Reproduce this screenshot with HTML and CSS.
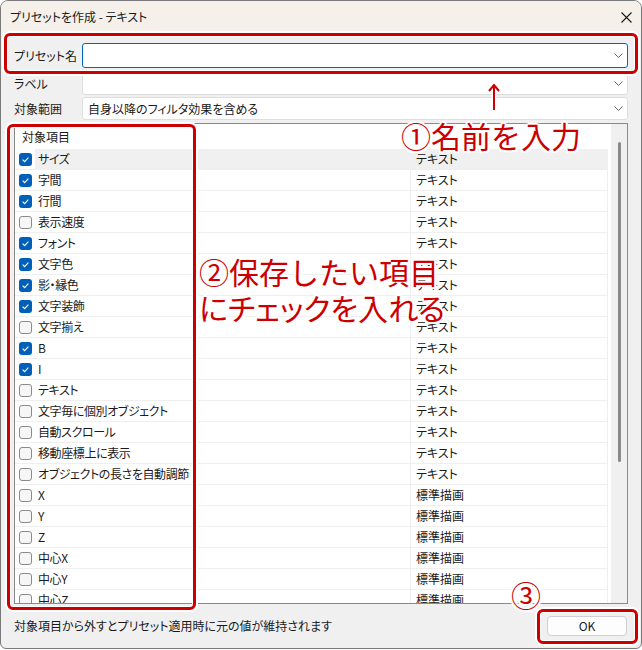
FILE: index.html
```html
<!DOCTYPE html>
<html lang="ja">
<head>
    <meta charset="UTF-8">
    <title>プリセットを作成 - テキスト</title>
    <link rel="stylesheet" href="styles.css">
</head>
<body>
<div class="window">
    <div class="titlebar">
        <span class="title">プリセットを作成 - テキスト</span>
        <svg class="close" width="11" height="11" viewBox="0 0 11 11"><path d="M0.5 0.5 L10.5 10.5 M10.5 0.5 L0.5 10.5" stroke="#1a1a1a" stroke-width="1.1" fill="none"/></svg>
    </div>

    <div class="content">
        <div class="field field-name">
            <label>プリセット名</label>
            <div class="combo focused">
                <span></span>
                <svg class="chev" width="9" height="5" viewBox="0 0 9 5"><polyline points="0.5,0.5 4.5,4.5 8.5,0.5" stroke="#666" fill="none"/></svg>
            </div>
        </div>
        <div class="field field-label">
            <label>ラベル</label>
            <div class="combo">
                <span></span>
                <svg class="chev" width="9" height="5" viewBox="0 0 9 5"><polyline points="0.5,0.5 4.5,4.5 8.5,0.5" stroke="#666" fill="none"/></svg>
            </div>
        </div>
        <div class="field field-range">
            <label>対象範囲</label>
            <div class="combo">
                <span>自身以降のフィルタ効果を含める</span>
                <svg class="chev" width="9" height="5" viewBox="0 0 9 5"><polyline points="0.5,0.5 4.5,4.5 8.5,0.5" stroke="#666" fill="none"/></svg>
            </div>
        </div>

        <div class="list">
            <div class="list-body">
                <div class="list-head">対象項目</div>
                <div id="rows"></div>
            </div>
            <div class="scrollbar"><div class="thumb"></div></div>
        </div>

        <div class="footer">
            <span class="hint">対象項目から外すとプリセット適用時に元の値が維持されます</span>
            <button class="ok">OK</button>
        </div>
    </div>

    <!-- annotations -->
    <div class="mark mark-name"></div>
    <div class="mark mark-list"></div>
    <div class="mark mark-ok"></div>
    <svg class="arrow" width="16" height="30" viewBox="0 0 16 30">
        <path d="M8 3 V28 M3 9 L8 3 L13 9" stroke="#fff" stroke-width="5" fill="none" stroke-linejoin="round"/>
        <path d="M8 3 V28 M3 9 L8 3 L13 9" stroke="#cc0000" stroke-width="2" fill="none"/>
    </svg>
    <div class="note note-1">①名前を入力</div>
    <div class="note note-2">②保存したい項目<br><span class="tight">にチェックを入れる</span></div>
    <div class="note note-3">③</div>
</div>

<script>
    var items = [
        ['サイズ', 1, 'テキスト'],
        ['字間', 1, 'テキスト'],
        ['行間', 1, 'テキスト'],
        ['表示速度', 0, 'テキスト'],
        ['フォント', 1, 'テキスト'],
        ['文字色', 1, 'テキスト'],
        ['影・縁色', 1, 'テキスト'],
        ['文字装飾', 1, 'テキスト'],
        ['文字揃え', 0, 'テキスト'],
        ['B', 1, 'テキスト'],
        ['I', 1, 'テキスト'],
        ['テキスト', 0, 'テキスト'],
        ['文字毎に個別オブジェクト', 0, 'テキスト'],
        ['自動スクロール', 0, 'テキスト'],
        ['移動座標上に表示', 0, 'テキスト'],
        ['オブジェクトの長さを自動調節', 0, 'テキスト'],
        ['X', 0, '標準描画'],
        ['Y', 0, '標準描画'],
        ['Z', 0, '標準描画'],
        ['中心X', 0, '標準描画'],
        ['中心Y', 0, '標準描画'],
        ['中心Z', 0, '標準描画']
    ];
    var check = '<svg width="13" height="13" viewBox="0 0 13 13"><polyline points="3.6,6.7 5.6,8.6 9.4,4.6" stroke="#fff" stroke-width="1.1" fill="none"/></svg>';
    var html = '';
    items.forEach(function (it, i) {
        html += '<div class="row' + (i === 0 ? ' selected' : '') + '">' +
            '<div class="cell-name"><span class="box' + (it[1] ? ' on' : '') + '">' + (it[1] ? check : '') + '</span>' +
            '<span class="name">' + it[0] + '</span></div>' +
            '<div class="cell-type">' + it[2] + '</div></div>';
    });
    document.getElementById('rows').innerHTML = html;
</script>
</body>
</html>
```

FILE: styles.css
```css
body {
    margin: 0;
    background: #fff;
    font-family: "Noto Sans CJK JP", sans-serif;
    font-size: 12px;
    color: #1a1a1a;
    font-feature-settings: "palt";
}
.window {
    position: relative;
    width: 642px;
    height: 649px;
    box-sizing: border-box;
    border: 1px solid #7a7a7a;
    border-radius: 8px 8px 6px 6px;
    background: #f0f0f0;
    overflow: hidden;
}
.titlebar {
    height: 31px;
    background: #f5f0e9;
    display: flex;
    align-items: center;
    justify-content: space-between;
    padding: 0 9px;
}
.close {
    margin-top: 1px;
}
.content {
    padding: 11px 13px 0 13px;
}
.field {
    display: grid;
    grid-template-columns: 68px 1fr;
    align-items: center;
}
.field-name { height: 25px; }
.field-label { height: 23px; margin-top: 4px; }
.field-range { height: 23px; margin-top: 2px; }
.combo {
    height: 100%;
    box-sizing: border-box;
    background: #fff;
    border: 1px solid #dedede;
    border-radius: 3px;
    display: flex;
    align-items: center;
    justify-content: space-between;
    padding: 0 4px 0 5px;
}
.combo.focused {
    border-color: #0067c0;
}
.list {
    margin-top: 3px;
    height: 481px;
    box-sizing: border-box;
    border: 1px solid #8a8a8a;
    background: #fff;
    display: flex;
    overflow: hidden;
}
.list-body {
    width: 595px;
    overflow: hidden;
}
.list-head {
    height: 25px;
    line-height: 25px;
    padding-left: 7px;
}
.row {
    display: flex;
    height: 21px;
    box-sizing: border-box;
    border-bottom: 1px solid #efefef;
}
.cell-name {
    width: 396px;
    box-sizing: border-box;
    border-right: 1px solid #efefef;
    display: flex;
    align-items: center;
    padding-left: 4px;
}
.name {
    flex: 1;
    height: 100%;
    line-height: 20px;
    margin-left: 3px;
    padding-left: 3px;
    white-space: nowrap;
    letter-spacing: -0.4px;
}
.cell-type {
    flex: 1;
    border-right: 1px solid #efefef;
    line-height: 20px;
    padding-left: 5px;
}
.row.selected .name,
.row.selected .cell-type {
    background: #f0f0f0;
}
.box {
    width: 13px;
    height: 13px;
    box-sizing: border-box;
    border: 1px solid #8a8a8a;
    border-radius: 3px;
    background: #f6f6f6;
    flex: none;
}
.box.on {
    border: none;
    background: #005fb8;
}
.box svg {
    display: block;
}
.scrollbar {
    width: 16px;
    margin-left: 3px;
    background: #f0f0f0;
}
.thumb {
    width: 3px;
    height: 320px;
    margin: 18px 0 0 7px;
    background: #8a8a8a;
    border-radius: 2px;
}
.footer {
    height: 43px;
    display: flex;
    align-items: center;
    justify-content: space-between;
}
.ok {
    width: 80px;
    height: 20px;
    margin-right: 1px;
    font: inherit;
    color: #1a1a1a;
    background: #fdfdfd;
    border: 1px solid #d0d0d0;
    border-radius: 4px;
    padding: 0;
}

/* annotations */
.mark {
    position: absolute;
    box-sizing: border-box;
    border: 3px solid #cc0000;
    border-radius: 6px;
    box-shadow: 0 0 0 2px #fff, inset 0 0 0 1px #fff;
}
.mark-name { left: 3px; top: 32px; width: 634px; height: 41px; }
.mark-list { left: 6px; top: 123px; width: 189px; height: 486px; }
.mark-ok { left: 536px; top: 608px; width: 101px; height: 35px; }
.arrow {
    position: absolute;
    left: 485px;
    top: 81px;
}
.note {
    position: absolute;
    color: #cc0000;
    font-size: 30px;
    font-weight: 400;
    line-height: 36px;
    white-space: nowrap;
    font-feature-settings: normal;
    text-shadow: 2px 0 #fff, -2px 0 #fff, 0 2px #fff, 0 -2px #fff,
        1.5px 1.5px #fff, -1.5px 1.5px #fff, 1.5px -1.5px #fff, -1.5px -1.5px #fff;
}
.note .tight {
    font-feature-settings: "palt";
}
.note-1 { left: 400px; top: 116px; }
.note-2 { left: 198px; top: 252px; }
.note-3 { left: 510px; top: 575px; }
```
